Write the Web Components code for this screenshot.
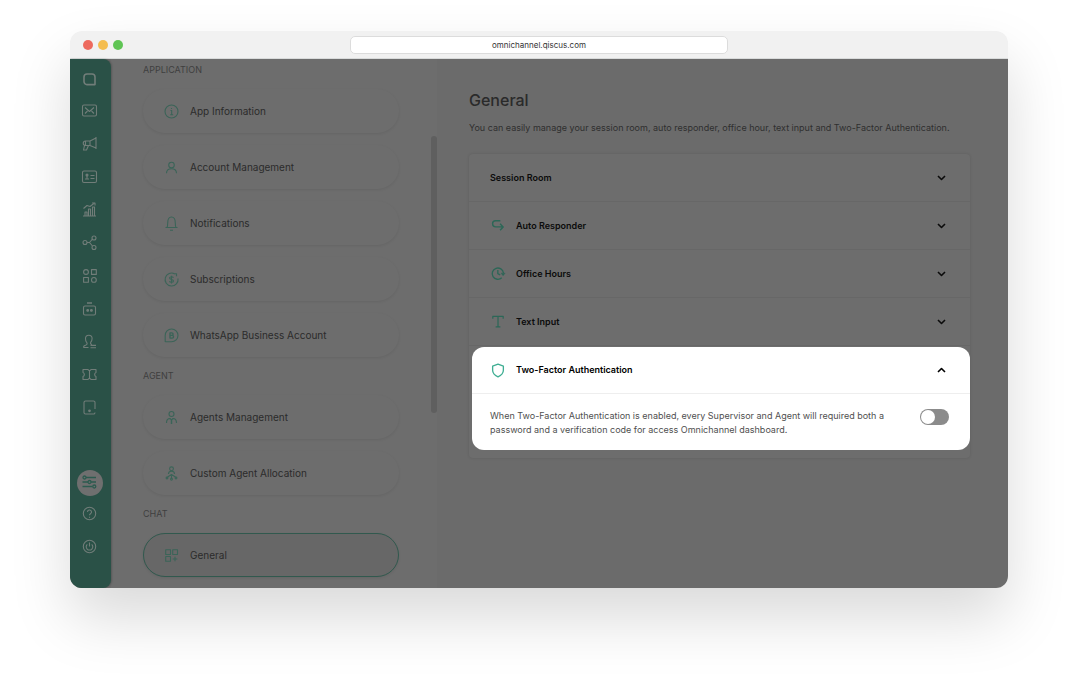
<!DOCTYPE html>
<html lang="en">
<head>
<meta charset="utf-8">
<meta name="viewport" content="width=device-width, initial-scale=1">
<title>Omnichannel settings</title>
<style>
  html { background: #fff; }
  body { margin: 0; padding: 31px 70px 0; min-height: 100vh; box-sizing: border-box; font-family: Inter, "Liberation Sans", sans-serif; }
</style>
</head>
<body>
<browser-window address="omnichannel.qiscus.com">
  <side-rail></side-rail>
  <settings-menu>
    <menu-group heading="Application">
      <menu-link icon="info">App Information</menu-link>
      <menu-link icon="user">Account Management</menu-link>
      <menu-link icon="bell">Notifications</menu-link>
      <menu-link icon="dollar">Subscriptions</menu-link>
      <menu-link icon="whatsapp">WhatsApp Business Account</menu-link>
    </menu-group>
    <menu-group heading="Agent">
      <menu-link icon="agent">Agents Management</menu-link>
      <menu-link icon="allocation">Custom Agent Allocation</menu-link>
    </menu-group>
    <menu-group heading="Chat">
      <menu-link icon="widgets" selected>General</menu-link>
    </menu-group>
  </settings-menu>
  <settings-page heading="General">
    <span slot="intro">You can easily manage your session room, auto responder, office hour, text input and Two-Factor Authentication.</span>
    <accordion-row>Session Room</accordion-row>
    <accordion-row icon="reply">Auto Responder</accordion-row>
    <accordion-row icon="clock">Office Hours</accordion-row>
    <accordion-row icon="text">Text Input</accordion-row>
    <accordion-row icon="shield" open>Two-Factor Authentication
      <toggle-setting slot="panel">When Two-Factor Authentication is enabled, every Supervisor and Agent will required both a password and a verification code for access Omnichannel dashboard.</toggle-setting>
    </accordion-row>
  </settings-page>
</browser-window>

<script>
const ICONS = {
  logo: '<path stroke-width="1.6" d="M6 3h5a3 3 0 0 1 3 3v7.600h-8a3 3 0 0 1-3-3V6a3 3 0 0 1 3-3z"/>',
  mail: '<rect x="1.500" y="3" width="14" height="11" rx="1.500"/><path d="M4 5.500l4.500 4 4.500-4M4 11.500l2.500-2.500M13 11.500l-2.500-2.500"/>',
  horn: '<path d="M15 2v12M15 3L9 6H4.500a2 2 0 0 0 0 4.500H9l6 2.500M9 6v4.500M4.500 6v4.500M3.500 10.500l-1 4.500h3l2-4.500"/>',
  card: '<rect x="1.500" y="3" width="14" height="11.500" rx="1.500"/><path d="M9.500 7.500h4M9.500 10.500h4M4 11h4"/><circle cx="6" cy="7" r="1" fill="currentColor"/><path d="M6 8v3"/>',
  chart: '<path d="M2 15h13M4 15v-4h2v4M7.500 15V8h2v7M11.500 15V6h2v9M2.500 7.500L6 4.500l3 1 4.500-3.500"/><path d="M11 2h3v2.500"/>',
  share: '<circle cx="4" cy="8.500" r="2"/><circle cx="13" cy="4" r="2"/><circle cx="13" cy="13.500" r="2"/><path d="M6 8.500h2.500l3-3.500M8.500 8.500l3 3.500"/>',
  apps: '<circle cx="5" cy="5" r="2.400"/><rect x="10.500" y="2.600" width="4.800" height="4.800"/><rect x="2.600" y="10.500" width="4.800" height="4.800"/><circle cx="12.900" cy="12.900" r="2.400"/>',
  robot: '<rect x="2.500" y="6" width="12" height="9" rx="1.500"/><path d="M6 3h5" stroke-width="1.500"/><circle cx="6.700" cy="10.400" r=".9" fill="currentColor"/><circle cx="10.400" cy="10.400" r=".9" fill="currentColor"/>',
  person: '<path d="M2.500 14.500h5M5 12c1.500-.6 1.300-1.800.5-2.800C4.600 8 4.500 6.500 4.500 5.500a3.300 3.300 0 0 1 6.600 0c0 1.500-.6 2.800-1.300 3.700-.6.900-.2 1.800 1 2.300M5 12c-1.300.3-2.500 1-2.500 2.500M9.500 12.400h5.500M9.500 14.800h5.500"/>',
  ticket: '<path d="M2 3.500h5c.5 1.300 2.500 1.300 3 0h5v3c-1.800.5-1.800 3.500 0 4v3h-5c-.5-1.300-2.500-1.300-3 0H2v-3c1.800-.5 1.800-3.500 0-4zM8.500 4.500v8"/>',
  tablet: '<path d="M14 10V3.500A1.500 1.500 0 0 0 12.500 2h-8A1.500 1.500 0 0 0 3 3.500v10A1.500 1.500 0 0 0 4.500 15h8a1.500 1.500 0 0 0 1.500-1.500"/><circle cx="8.500" cy="11.800" r=".8" fill="currentColor"/>',
  sliders: '<g stroke-width="1.300"><path d="M5 2.500h10M1.500 7h5.500M10 7h5M1.500 11.500h10"/><circle cx="3.500" cy="2.500" r="1.500"/><circle cx="8.500" cy="7" r="1.500"/><circle cx="13.300" cy="11.500" r="1.500"/></g>',
  help: '<circle cx="8.500" cy="8.500" r="6.200"/><path d="M6.500 7a2 2 0 1 1 3 1.700c-.7.500-1 .8-1 1.500M8.500 11.700v1"/>',
  power: '<circle cx="8.500" cy="8.500" r="6.200"/><path d="M6.300 6.300a3.300 3.300 0 1 0 4.400 0M8.500 4.500v4"/>',
  info: '<circle cx="8.500" cy="8.500" r="6.500"/><path d="M7.500 7.500h1.200v4M7.200 11.700h3M8.500 5v1"/>',
  user: '<circle cx="8.500" cy="6" r="2.800"/><path d="M3.500 14.300c0-3.300 2-4.600 5-4.600s5 1.300 5 4.600"/>',
  bell: '<path d="M2.500 12.500h12M4 12.500c.5-1 .7-2 .7-4.500 0-3.500 1-6 3.800-6s3.800 2.500 3.800 6c0 2.500.2 3.500.7 4.500M7 15.200h3"/>',
  dollar: '<path d="M11.800 2.900a6.500 6.500 0 1 0 3.200 4.600M11 2.700h2.500v2.500"/><path d="M10.400 6.800c-.2-.7-1-1-1.900-1-1 0-1.900.4-1.900 1.300 0 1.900 3.900.9 3.900 2.900 0 .9-.9 1.300-2 1.300s-1.900-.4-2-1.200M8.500 4.700v7.700"/>',
  whatsapp: '<path d="M2.200 15V8.500a6.400 6.400 0 1 1 6.400 6.300H2.200"/><path stroke-width="1.400" d="M7 5.900h1.800a1.200 1.200 0 0 1 0 2.500H7h2.200a1.300 1.300 0 0 1 0 2.700H7z"/>',
  agent: '<circle cx="8.500" cy="5" r="2.500"/><path d="M3.500 14c0-3 1.500-4.500 3.500-4.500l1.500 1.300L10 9.500c2 0 3.500 1.500 3.500 4.500"/><path stroke-width="1.500" d="M8.500 10.500V15"/>',
  allocation: '<circle cx="8.500" cy="3.800" r="1.900"/><path d="M5.500 9c0-1.800 1-2.700 3-2.700s3 .9 3 2.700M8.500 9.500V13M4.500 12l4-2.500 4 2.500"/><circle cx="4" cy="13" r=".9"/><circle cx="8.500" cy="14.300" r=".9"/><circle cx="13" cy="13" r=".9"/>',
  widgets: '<rect x="2.700" y="2.700" width="4.800" height="4.800"/><rect x="9.700" y="2.700" width="4.800" height="4.800"/><rect x="2.700" y="9.500" width="4.800" height="4.800"/><path d="M12 9.700v4.600M9.700 12h4.600"/>',
  reply: '<path stroke-width="1.500" d="M11 3.500H6a3 3 0 0 0 0 6.500h8M10.700 6.700L14 10l-3.300 3.500"/>',
  clock: '<path stroke-width="1.400" d="M12.500 13a6 6 0 1 1 1.800-5M8.300 4.700v4l2.500 1.300"/><path fill="currentColor" stroke-width=".5" d="M11.800 8.200h4.200l-2.100 2.600z"/>',
  text: '<path stroke-width="1.300" d="M3 5.500V3h11v2.500M8.500 3v11M6 14.200h5"/>',
  shield: '<path stroke-width="1.400" d="M8.500 1.800l5.700 2v4.500c0 3.300-2.300 5.500-5.700 7-3.400-1.500-5.700-3.700-5.700-7V3.800z"/>',
  chevron: '<path stroke-width="1.600" d="M5 7l3.500 3.500L12 7"/>'
};

function define(name, css, html, setup) {
  const template = document.createElement("template");
  template.innerHTML = `<style>:host,*{box-sizing:border-box}${css}</style>${html}`;
  customElements.define(name, class extends HTMLElement {
    constructor() {
      super();
      this.attachShadow({ mode: "open" }).append(template.content.cloneNode(true));
    }
    connectedCallback() {
      if (setup) setup(this, selector => this.shadowRoot.querySelector(selector));
    }
  });
}

define("line-icon",
  `:host{display:block;flex:none;width:17px;height:17px}
   svg{display:block;width:100%;height:100%;fill:none;stroke:currentColor;stroke-width:1.1;stroke-linejoin:round}`,
  `<svg viewBox="0 0 17 17" aria-hidden="true"></svg>`,
  (el, $) => { $("svg").innerHTML = ICONS[el.getAttribute("name")] || ""; });

define("browser-window",
  `:host{display:block;border-radius:12px;overflow:hidden;box-shadow:0 30px 60px rgba(0,0,0,.15)}
   header{display:grid;grid-template-columns:1fr minmax(0,378px) 1fr;align-items:center;height:28px;padding:0 13px;background:#f1f1f1;border-bottom:1px solid #d9dbdb}
   .dots{display:flex;gap:5px}
   i{width:10px;height:10px;border-radius:50%;background:#ed6a5e}
   i:nth-child(2){background:#f4bd4f}
   i:nth-child(3){background:#5fc454}
   input{width:100%;height:18px;padding:0;border:1px solid #dcdcdc;border-radius:5px;background:#fff;color:#333;font:8px/16px Inter,"Liberation Sans",sans-serif;text-align:center}
   main{display:flex;background:#6b6b6b}
   ::slotted(settings-page){flex:1;min-width:0}`,
  `<header><div class="dots"><i></i><i></i><i></i></div><input type="text" aria-label="Address"></header><main><slot></slot></main>`,
  (el, $) => { $("input").value = el.getAttribute("address"); });

const railLink = ([icon, label]) => `<a href="#${icon}" aria-label="${label}"><line-icon name="${icon}"></line-icon></a>`;
define("side-rail",
  `:host{display:block;position:relative;z-index:1;flex:none;width:41px;background:#2a5147;border-radius:0 8px 8px 0;box-shadow:1px 0 2px rgba(0,0,0,.2)}
   nav{display:flex;flex-direction:column;align-items:center;height:100%;padding:5px 2px 25px 0}
   a{display:grid;place-items:center;width:33px;height:33px;color:#717d79}
   a:first-child{height:30px}
   .active{width:26px;height:26px;margin:auto 0 1px;border-radius:50%;background:#6f6f6f;color:#2c5b4f}`,
  `<nav>${[["logo", "Home"], ["mail", "Inbox"], ["horn", "Broadcast"], ["card", "Contacts"], ["chart", "Analytics"],
    ["share", "Integration"], ["apps", "App Center"], ["robot", "Bot"], ["person", "Agents"], ["ticket", "Tickets"], ["tablet", "Devices"]].map(railLink).join("")}
   <a class="active" href="#settings" aria-label="Settings"><line-icon name="sliders"></line-icon></a>
   ${[["help", "Help"], ["power", "Log out"]].map(railLink).join("")}</nav>`);

define("settings-menu",
  `:host{display:block;position:relative;flex:none;width:326px;padding:0 38px 11px 32px;background:#6d6d6d}
   .thumb{position:absolute;right:0;top:77px;width:6px;height:277px;border-radius:3px;background:#5f5f5f}`,
  `<nav><slot></slot></nav><div class="thumb"></div>`);

define("menu-group",
  `:host{display:block}
   h2{margin:0;padding:8px 0;color:#3f3f3f;font-size:9px;font-weight:400;line-height:22px;text-transform:uppercase}
   :host(:first-child) h2{padding-top:0}
   .items{display:grid;gap:12px}`,
  `<h2></h2><div class="items"><slot></slot></div>`,
  (el, $) => { $("h2").textContent = el.getAttribute("heading"); });

define("menu-link",
  `:host{display:block}
   a{display:flex;align-items:center;gap:10px;height:44px;padding:0 20px;border-radius:22px;color:#2b2b2b;font-size:10px;line-height:16px;text-decoration:none;box-shadow:0 1px 3px rgba(0,0,0,.08)}
   line-icon{color:#3b6458}
   :host([selected]) a{padding:0 19px;border:1px solid #31594e;background:#676767}`,
  `<a href="#"><slot></slot></a>`,
  (el, $) => { $("a").insertAdjacentHTML("afterbegin", `<line-icon name="${el.getAttribute("icon")}"></line-icon>`); });

define("settings-page",
  `:host{display:block;padding:29px 38px 0 32px}
   h1{margin:0;color:#2a2a2a;font-size:16px;font-weight:500;line-height:24px}
   p{margin:8px 0 18px;color:#2f2f2f;font-size:9px;line-height:16px}
   section{border-radius:4px;background:#6d6d6d;box-shadow:0 0 3px rgba(0,0,0,.12)}`,
  `<h1></h1><p><slot name="intro"></slot></p><section><slot></slot></section>`,
  (el, $) => { $("h1").textContent = el.getAttribute("heading"); });

define("accordion-row",
  `:host{display:block;border-bottom:1px solid #676767}
   h3{margin:0}
   button{display:flex;align-items:center;gap:10px;width:100%;height:47px;padding:0 20px 0 21px;border:0;background:none;color:#0b0b0b;font:600 9px/16px Inter,"Liberation Sans",sans-serif;text-align:left}
   .mark{color:#2c6757;width:16px}
   .chevron{margin-left:auto}
   :host([open]){margin:0 0 0 3px;border:0;padding:1px 0 8px}
   :host([open]) article{border-radius:12px;background:#fff}
   :host([open]) button{padding-left:18px;height:46px;color:#000}
   :host([open]) .mark{color:#3fae93}
   :host([open]) .chevron{transform:rotate(180deg)}
   :host([open]) .panel{border-top:1px solid #eee}`,
  `<article><h3><button type="button"><slot></slot><line-icon class="chevron" name="chevron"></line-icon></button></h3><div class="panel"><slot name="panel"></slot></div></article>`,
  (el, $) => {
    const icon = el.getAttribute("icon");
    if (icon) $("button").insertAdjacentHTML("afterbegin", `<line-icon class="mark" name="${icon}"></line-icon>`);
    $("button").setAttribute("aria-expanded", el.hasAttribute("open"));
  });

define("toggle-setting",
  `:host{display:block}
   label{display:flex;align-items:flex-start;justify-content:space-between;gap:32px;padding:15px 21px 13px 18px;color:#4f4f4f;font-size:9px;line-height:14px}
   input{appearance:none;flex:none;width:29px;height:16px;margin:0;padding:1px;border-radius:8px;background:#8b8b8b}
   input::before{content:"";display:block;width:14px;height:14px;border-radius:50%;background:#fff}
   input:checked::before{margin-left:auto}`,
  `<label><span><slot></slot></span><input type="checkbox" role="switch"></label>`);
</script>
</body>
</html>
